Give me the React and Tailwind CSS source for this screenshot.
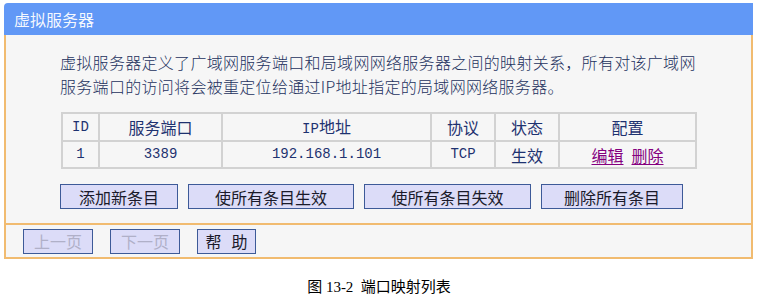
import React from 'react';

const cjk = "font-['Noto_Sans_CJK_SC',sans-serif]";
const mono = "font-['Liberation_Mono','Noto_Sans_CJK_SC',monospace] text-[14px]";

const rows = [{ id: '1', port: '3389', ip: '192.168.1.101', proto: 'TCP', state: '生效' }];

function Btn({ w, children, disabled }) {
  return (
    <button
      className={`h-[25px] ${w} border border-[#3d5a98] bg-[#dcdcf8] text-[16px] leading-none ${disabled ? 'text-[#b0b0c8]' : 'text-[#1a1a2a]'}`}
    >
      {children}
    </button>
  );
}

export default function App() {
  const th = 'border-2 border-[#d2d2d2] h-[27px] p-0 font-normal text-center';
  return (
    <div className={`w-[758px] h-[295px] bg-white ${cjk} text-[#24325e]`}>
      <div className="pt-[3px] pl-[4px]">
        <div className="w-[749px]">
          <div className="h-[32px] bg-[#6198f6] rounded-tl-[4px] flex items-center pl-[10px] text-[16px] text-white/95">虚拟服务器</div>
          <div className="border-x-2 border-b-2 border-[#f1bb70] bg-[#f6f6f6]">
            <div className="px-[54px] pt-[15px] pb-[14px]">
              <p className="text-[16px] leading-[24px] tracking-[0.3px] font-light">
                虚拟服务器定义了广域网服务端口和局域网网络服务器之间的映射关系，所有对该广域网服务端口的访问将会被重定位给通过IP地址指定的局域网网络服务器。
              </p>
              <table className="mt-[14px] ml-[1px] w-[636px] border-collapse text-[16px] text-[#1e3270]">
                <thead>
                  <tr>
                    <th className={`${th} w-[37px] ${mono}`}>ID</th>
                    <th className={`${th} w-[123px]`}>服务端口</th>
                    <th className={`${th} w-[209px]`}><span className={mono}>IP</span>地址</th>
                    <th className={`${th} w-[64px]`}>协议</th>
                    <th className={`${th} w-[64px]`}>状态</th>
                    <th className={th}>配置</th>
                  </tr>
                </thead>
                <tbody>
                  {rows.map(r => (
                    <tr key={r.id}>
                      <td className={`${th} ${mono}`}>{r.id}</td>
                      <td className={`${th} ${mono}`}>{r.port}</td>
                      <td className={`${th} ${mono}`}>{r.ip}</td>
                      <td className={`${th} ${mono}`}>{r.proto}</td>
                      <td className={th}>{r.state}</td>
                      <td className={th}>
                        <a className="text-[#85007f] underline underline-offset-2">编辑</a>
                        <a className="ml-[8px] text-[#85007f] underline underline-offset-2">删除</a>
                      </td>
                    </tr>
                  ))}
                </tbody>
              </table>
              <div className="mt-[15px] flex gap-[10px]">
                <Btn w="w-[118px]">添加新条目</Btn>
                <Btn w="w-[166px]">使所有条目生效</Btn>
                <Btn w="w-[167px]">使所有条目失效</Btn>
                <Btn w="w-[142px]">删除所有条目</Btn>
              </div>
            </div>
            <div className="border-t-2 border-[#f1bb70] h-[34px] flex items-center pl-[17px] gap-[17px]">
              <Btn w="w-[70px]" disabled>上一页</Btn>
              <Btn w="w-[70px]" disabled>下一页</Btn>
              <Btn w="w-[59px]"><span className="tracking-[10px] -mr-[10px]">帮助</span></Btn>
            </div>
          </div>
        </div>
      </div>
      <div className="mt-[17px] text-center text-[15px] text-black font-['Liberation_Serif','Noto_Sans_CJK_SC',serif]">
        图 13-2&nbsp; 端口映射列表
      </div>
    </div>
  );
}
